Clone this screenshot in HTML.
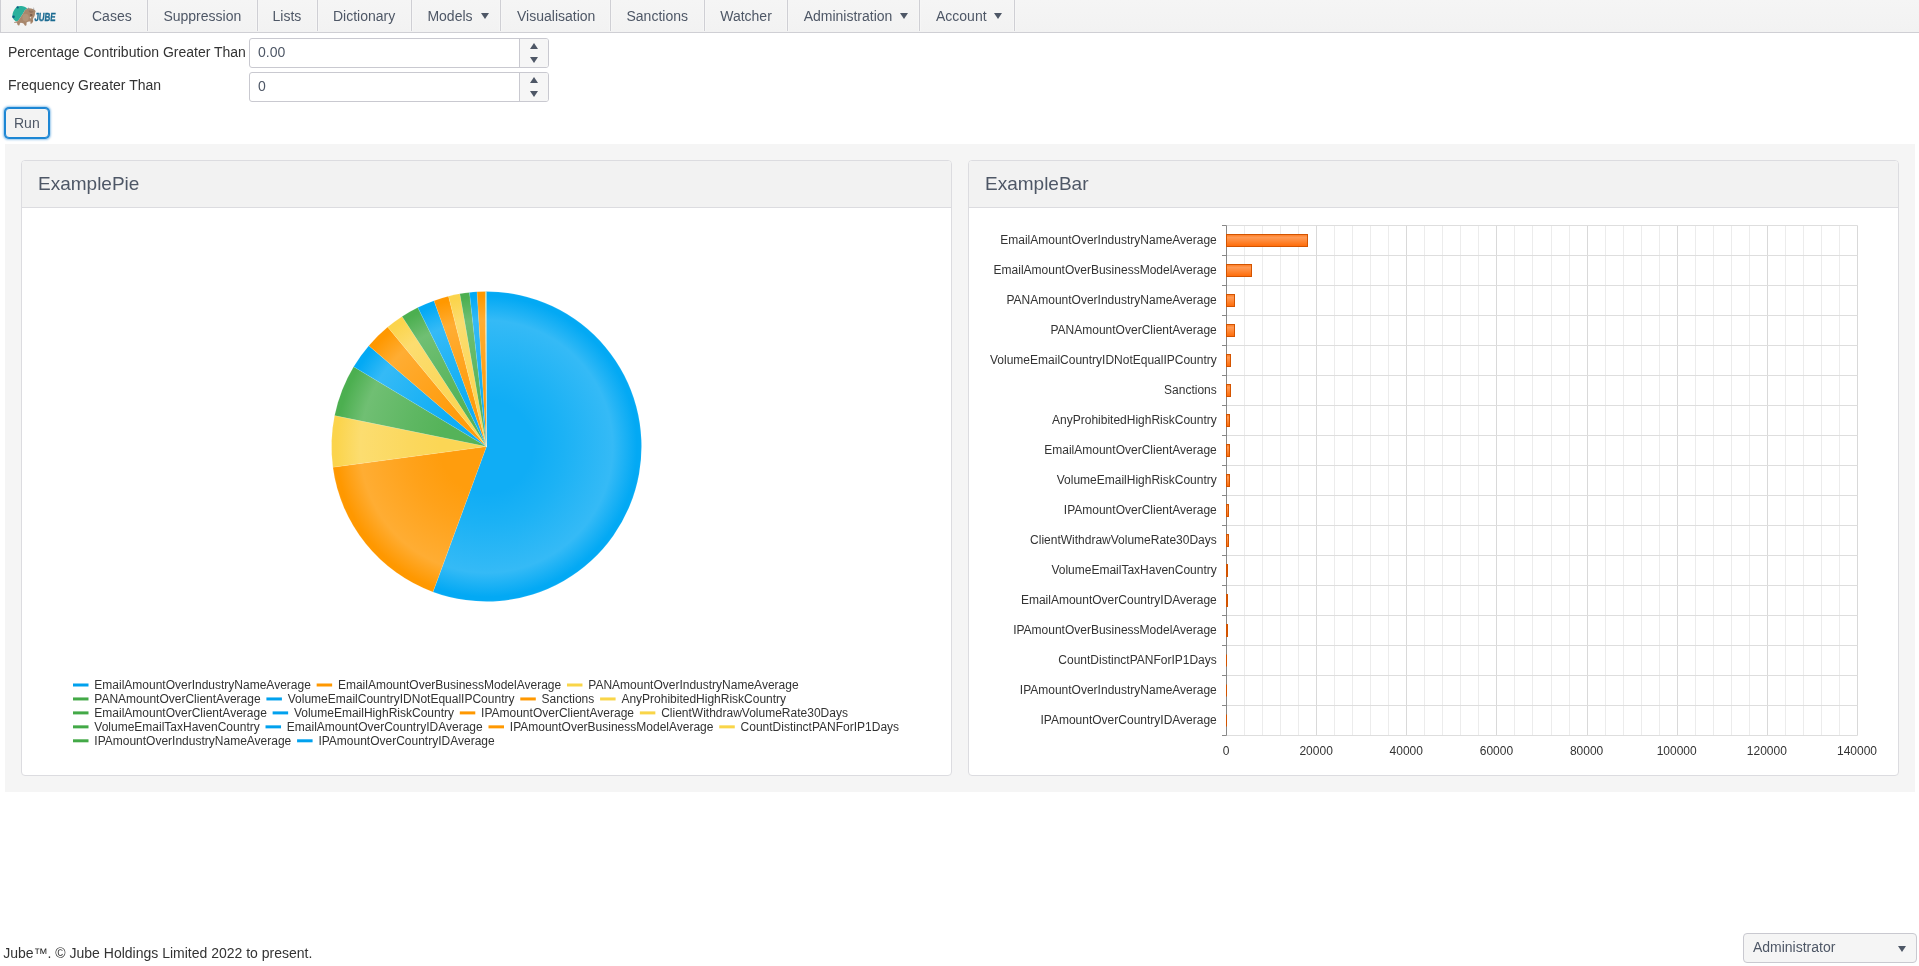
<!DOCTYPE html>
<html><head><meta charset="utf-8"><title>Jube</title>
<style>
html,body{margin:0;padding:0}
body{width:1919px;height:966px;overflow:hidden;position:relative;background:#fff;font-family:"Liberation Sans",sans-serif;}
#root{position:absolute;left:0;top:0;width:1919px;height:966px;background:#fff;will-change:transform;overflow:hidden}
.a{position:absolute}
.menu{left:0;top:0;width:1919px;height:32px;background:linear-gradient(#f5f5f5,#f2f2f2);border-bottom:1px solid #cfcfd4}
.sep{top:0;width:1px;height:31px;background:#cfcfd4;box-shadow:-1px 0 0 #f6f6f6,1px 0 0 #f6f6f6}
.mi{top:0;height:32px;line-height:32px;font-size:14px;color:#4e5766;white-space:nowrap}
.arr{width:0;height:0;border-left:4px solid transparent;border-right:4px solid transparent;border-top:6px solid #4e5766}
.lbl{font-size:14px;color:#333;white-space:nowrap;line-height:16px}
.inp{background:#fff;border:1px solid #c9c9d0;border-radius:3px;box-sizing:border-box}
.spin{background:#f6f6f6;border-left:1px solid #c9c9d0;border-radius:0 2px 2px 0;box-sizing:border-box}
.up{width:0;height:0;border-left:4px solid transparent;border-right:4px solid transparent;border-bottom:6px solid #4e5766}
.dn{width:0;height:0;border-left:4px solid transparent;border-right:4px solid transparent;border-top:6px solid #4e5766}
.itx{font-size:14px;color:#4e5766;line-height:16px;white-space:nowrap}
.panel{left:5px;top:144px;width:1910px;height:648px;background:#f5f5f5}
.card{top:160px;width:931px;height:616px;box-sizing:border-box;border:1px solid #dcdce0;border-radius:4px;background:#fff;overflow:hidden}
.card .hd{left:0;top:0;width:929px;height:46px;background:#f2f2f2;border-bottom:1px solid #dcdce0}
.htx{font-size:19px;color:#4e5766;line-height:20px;white-space:nowrap}
</style></head><body><div id="root">
<div class="a menu"></div>
<div class="a" style="left:0;top:0;width:1px;height:32px;background:#cfcfd4"></div>
<div class="a sep" style="left:76px;height:32px;"></div>
<div class="a sep" style="left:147px;"></div>
<div class="a sep" style="left:257px;"></div>
<div class="a sep" style="left:317px;"></div>
<div class="a sep" style="left:411px;"></div>
<div class="a sep" style="left:500px;"></div>
<div class="a sep" style="left:610px;"></div>
<div class="a sep" style="left:704px;"></div>
<div class="a sep" style="left:787px;"></div>
<div class="a sep" style="left:919px;"></div>
<div class="a sep" style="left:1014px;"></div>
<div class="a mi" style="left:92.0px">Cases</div>
<div class="a mi" style="left:163.4px">Suppression</div>
<div class="a mi" style="left:272.5px">Lists</div>
<div class="a mi" style="left:333.0px">Dictionary</div>
<div class="a mi" style="left:427.4px">Models</div>
<div class="a arr" style="left:480.8px;top:13px"></div>
<div class="a mi" style="left:517.0px">Visualisation</div>
<div class="a mi" style="left:626.5px">Sanctions</div>
<div class="a mi" style="left:720.2px">Watcher</div>
<div class="a mi" style="left:803.7px">Administration</div>
<div class="a arr" style="left:900.0px;top:13px"></div>
<div class="a mi" style="left:936.0px">Account</div>
<div class="a arr" style="left:994.4px;top:13px"></div>
<svg class="a" style="left:0;top:0" width="76" height="32" viewBox="0 0 76 32">
<path d="M16.7 6.7 C18.5 6 20 5.9 21.4 6 C23.3 6.2 25.9 7.2 27.2 8.5 L24.9 10.2 L22.7 13.9 L20.4 17.4 L18.5 20.2 L17 21.4 C16.2 21.6 15.4 21.3 14.8 20.6 C13.3 19.2 12.4 17.8 12.4 15.8 C12.5 12.8 13.8 9.6 16.7 6.7 Z" fill="#2ab09c"/>
<circle cx="17.7" cy="7.4" r="1.15" fill="#0c5c82"/>
<circle cx="13.5" cy="16.8" r="1.3" fill="#0c5c82"/>
<path d="M27.2 8.5 C29 8.2 31.5 8.4 33.5 9.2 C34.6 9.8 35.6 10.6 35.6 11.3 C35.5 12 35.1 12.4 35 13 C35 14 34.9 15 34.6 15.8 C34.3 16.6 34 17.2 33.6 17.6 C33.2 18.4 32.8 19.2 32.8 19.8 C33.2 20.6 33.3 21.4 32.9 22 C32.4 22.8 31.8 23.6 31.1 23.7 C30.5 23.7 30.2 23.3 30.4 22.7 C30.6 22.2 30.9 21.8 30.6 21.5 C29.8 21.4 28.8 21.6 28 21.8 C27.2 22 26.6 22.3 26.5 23 C26.6 23.9 26.7 24.8 26.2 25.4 C25.7 25.8 24.9 25.8 24.6 25.2 C24.2 24.6 23.9 23.9 23.5 23.5 C22.6 23.1 21.6 22.9 20.8 22.8 C20.1 23 19.7 23.6 19.6 24.4 C19.6 25 19.3 25.5 18.6 25.5 C17.9 25.5 17.4 24.9 17.3 24.1 C17.2 23.6 17.1 23.1 16.8 22.8 C16 22.5 15 22.7 14.2 22.7 C13.9 22.6 13.9 22.2 14.3 22 C15.2 21.6 16.2 21.6 17 21.4 L18.5 20.2 L20.4 17.4 L22.7 13.9 L24.9 10.2 Z" fill="#a8876c"/>
<ellipse cx="25.6" cy="17.6" rx="3.2" ry="3.8" fill="#bb9d82" opacity="0.6"/>
<path d="M28.4 10.6 C30 10.2 32 10.4 33.6 11.2 C33.2 12.2 32.4 12.8 31.2 12.9 C30 13 29 12.4 28.4 10.6 Z" fill="#8d6e58" opacity="0.7"/>
<ellipse cx="31.2" cy="15" rx="1.4" ry="0.8" fill="#6a4c3c"/>
<path d="M29.6 17 L31.3 17.2 L30.6 18.7 Z" fill="#ece6e0"/>
<path d="M28.1 10.3 C28.2 9 28.4 7.9 28.8 7.1 C29.1 8 29.1 9.2 29 10.4 Z M33.4 10.6 C33.4 9.3 33.5 8 33.9 6.9 C34.2 8 34.2 9.4 34.1 10.7 Z" fill="#8f8d8e"/>
<path d="M32.8 19.8 C32.2 20.4 31.4 20.6 30.6 21.5" stroke="#7e604c" stroke-width="0.5" fill="none" opacity="0.7"/>
<g transform="translate(34.3 21.4) skewX(-5) scale(0.69 1)"><text x="0" y="0" font-family="Liberation Sans" font-weight="bold" font-size="11.6" fill="#1b6b92" stroke="#1b6b92" stroke-width="0.35" letter-spacing="-0.2">JUBE</text></g>
</svg>
<div class="a lbl" style="left:8px;top:44px">Percentage Contribution Greater Than</div>
<div class="a inp" style="left:249px;top:38px;width:300px;height:30px"></div>
<div class="a spin" style="left:519px;top:39px;width:29px;height:28px"></div>
<div class="a up" style="left:530px;top:43px"></div>
<div class="a dn" style="left:530px;top:57px"></div>
<div class="a itx" style="left:258px;top:44px">0.00</div>
<div class="a lbl" style="left:8px;top:77px">Frequency Greater Than</div>
<div class="a inp" style="left:249px;top:72px;width:300px;height:30px"></div>
<div class="a spin" style="left:519px;top:73px;width:29px;height:28px"></div>
<div class="a up" style="left:530px;top:77px"></div>
<div class="a dn" style="left:530px;top:91px"></div>
<div class="a itx" style="left:258px;top:78px">0</div>
<div class="a" style="left:5px;top:108px;width:44px;height:30px;box-sizing:border-box;border:1px solid #1c86d4;border-radius:4px;background:#f3f3f3;box-shadow:0 0 0 1px #1c86d4,0 0 2px 1.5px rgba(28,134,212,.45)"></div>
<div class="a itx" style="left:14px;top:115px">Run</div>
<div class="a panel"></div>
<div class="a card" style="left:21px"><div class="a hd"></div></div>
<div class="a card" style="left:968px"><div class="a hd"></div></div>
<div class="a htx" style="left:38px;top:174px">ExamplePie</div>
<div class="a htx" style="left:985px;top:174px">ExampleBar</div>
<svg class="a" style="left:21px;top:208px" width="931" height="567" viewBox="21 208 931 567"><defs><radialGradient id="pg0" gradientUnits="userSpaceOnUse" cx="486.5" cy="446.5" r="155"><stop offset="0" stop-color="#10adf5"/><stop offset="0.3" stop-color="#10adf5"/><stop offset="0.5" stop-color="#1cb2f5"/><stop offset="0.815" stop-color="#35baf6"/><stop offset="0.97" stop-color="#03a9f4"/></radialGradient><radialGradient id="pg1" gradientUnits="userSpaceOnUse" cx="486.5" cy="446.5" r="155"><stop offset="0" stop-color="#ff9d0d"/><stop offset="0.3" stop-color="#ff9d0d"/><stop offset="0.5" stop-color="#ffa21a"/><stop offset="0.815" stop-color="#ffad33"/><stop offset="0.97" stop-color="#ff9800"/></radialGradient><radialGradient id="pg2" gradientUnits="userSpaceOnUse" cx="486.5" cy="446.5" r="155"><stop offset="0" stop-color="#fbd655"/><stop offset="0.3" stop-color="#fbd655"/><stop offset="0.5" stop-color="#fbd85e"/><stop offset="0.815" stop-color="#fcdd70"/><stop offset="0.97" stop-color="#fbd44c"/></radialGradient><radialGradient id="pg3" gradientUnits="userSpaceOnUse" cx="486.5" cy="446.5" r="155"><stop offset="0" stop-color="#55b359"/><stop offset="0.3" stop-color="#55b359"/><stop offset="0.5" stop-color="#5eb762"/><stop offset="0.815" stop-color="#70bf73"/><stop offset="0.97" stop-color="#4caf50"/></radialGradient></defs><path d="M486.5 446.5 L486.50 291.50 A155 155 0 1 1 432.98 591.97 Z" fill="url(#pg0)" stroke="#ffffff" stroke-opacity="0.2" stroke-width="0.5"/><path d="M486.5 446.5 L432.98 591.97 A155 155 0 0 1 332.90 467.27 Z" fill="url(#pg1)" stroke="#ffffff" stroke-opacity="0.2" stroke-width="0.5"/><path d="M486.5 446.5 L332.90 467.27 A155 155 0 0 1 334.61 415.60 Z" fill="url(#pg2)" stroke="#ffffff" stroke-opacity="0.2" stroke-width="0.5"/><path d="M486.5 446.5 L334.61 415.60 A155 155 0 0 1 353.64 366.67 Z" fill="url(#pg3)" stroke="#ffffff" stroke-opacity="0.2" stroke-width="0.5"/><path d="M486.5 446.5 L353.64 366.67 A155 155 0 0 1 368.81 345.63 Z" fill="url(#pg0)" stroke="#ffffff" stroke-opacity="0.2" stroke-width="0.5"/><path d="M486.5 446.5 L368.81 345.63 A155 155 0 0 1 387.70 327.07 Z" fill="url(#pg1)" stroke="#ffffff" stroke-opacity="0.2" stroke-width="0.5"/><path d="M486.5 446.5 L387.70 327.07 A155 155 0 0 1 402.08 316.51 Z" fill="url(#pg2)" stroke="#ffffff" stroke-opacity="0.2" stroke-width="0.5"/><path d="M486.5 446.5 L402.08 316.51 A155 155 0 0 1 417.82 307.54 Z" fill="url(#pg3)" stroke="#ffffff" stroke-opacity="0.2" stroke-width="0.5"/><path d="M486.5 446.5 L417.82 307.54 A155 155 0 0 1 434.00 300.66 Z" fill="url(#pg0)" stroke="#ffffff" stroke-opacity="0.2" stroke-width="0.5"/><path d="M486.5 446.5 L434.00 300.66 A155 155 0 0 1 448.48 296.24 Z" fill="url(#pg1)" stroke="#ffffff" stroke-opacity="0.2" stroke-width="0.5"/><path d="M486.5 446.5 L448.48 296.24 A155 155 0 0 1 459.85 293.81 Z" fill="url(#pg2)" stroke="#ffffff" stroke-opacity="0.2" stroke-width="0.5"/><path d="M486.5 446.5 L459.85 293.81 A155 155 0 0 1 469.49 292.44 Z" fill="url(#pg3)" stroke="#ffffff" stroke-opacity="0.2" stroke-width="0.5"/><path d="M486.5 446.5 L469.49 292.44 A155 155 0 0 1 477.04 291.79 Z" fill="url(#pg0)" stroke="#ffffff" stroke-opacity="0.2" stroke-width="0.5"/><path d="M486.5 446.5 L477.04 291.79 A155 155 0 0 1 485.42 291.50 Z" fill="url(#pg1)" stroke="#ffffff" stroke-opacity="0.2" stroke-width="0.5"/><path d="M486.5 446.5 L485.42 291.50 A155 155 0 0 1 485.82 291.50 Z" fill="url(#pg2)" stroke="#ffffff" stroke-opacity="0.2" stroke-width="0.5"/><path d="M486.5 446.5 L485.82 291.50 A155 155 0 0 1 486.23 291.50 Z" fill="url(#pg3)" stroke="#ffffff" stroke-opacity="0.2" stroke-width="0.5"/><path d="M486.5 446.5 L486.23 291.50 A155 155 0 0 1 486.50 291.50 Z" fill="url(#pg0)" stroke="#ffffff" stroke-opacity="0.2" stroke-width="0.5"/><rect x="73.00" y="683.50" width="15.5" height="3" fill="#00a1ee"/><text x="94.30" y="688.80" font-family="Liberation Sans" font-size="12" fill="#333">EmailAmountOverIndustryNameAverage</text><rect x="316.65" y="683.50" width="15.5" height="3" fill="#ff9800"/><text x="337.95" y="688.80" font-family="Liberation Sans" font-size="12" fill="#333">EmailAmountOverBusinessModelAverage</text><rect x="566.97" y="683.50" width="15.5" height="3" fill="#f9d548"/><text x="588.27" y="688.80" font-family="Liberation Sans" font-size="12" fill="#333">PANAmountOverIndustryNameAverage</text><rect x="73.00" y="697.45" width="15.5" height="3" fill="#43a947"/><text x="94.30" y="702.75" font-family="Liberation Sans" font-size="12" fill="#333">PANAmountOverClientAverage</text><rect x="266.41" y="697.45" width="15.5" height="3" fill="#00a1ee"/><text x="287.71" y="702.75" font-family="Liberation Sans" font-size="12" fill="#333">VolumeEmailCountryIDNotEqualIPCountry</text><rect x="520.29" y="697.45" width="15.5" height="3" fill="#ff9800"/><text x="541.59" y="702.75" font-family="Liberation Sans" font-size="12" fill="#333">Sanctions</text><rect x="600.09" y="697.45" width="15.5" height="3" fill="#f9d548"/><text x="621.39" y="702.75" font-family="Liberation Sans" font-size="12" fill="#333">AnyProhibitedHighRiskCountry</text><rect x="73.00" y="711.40" width="15.5" height="3" fill="#43a947"/><text x="94.30" y="716.70" font-family="Liberation Sans" font-size="12" fill="#333">EmailAmountOverClientAverage</text><rect x="272.63" y="711.40" width="15.5" height="3" fill="#00a1ee"/><text x="293.93" y="716.70" font-family="Liberation Sans" font-size="12" fill="#333">VolumeEmailHighRiskCountry</text><rect x="459.79" y="711.40" width="15.5" height="3" fill="#ff9800"/><text x="481.09" y="716.70" font-family="Liberation Sans" font-size="12" fill="#333">IPAmountOverClientAverage</text><rect x="639.86" y="711.40" width="15.5" height="3" fill="#f9d548"/><text x="661.16" y="716.70" font-family="Liberation Sans" font-size="12" fill="#333">ClientWithdrawVolumeRate30Days</text><rect x="73.00" y="725.35" width="15.5" height="3" fill="#43a947"/><text x="94.30" y="730.65" font-family="Liberation Sans" font-size="12" fill="#333">VolumeEmailTaxHavenCountry</text><rect x="265.52" y="725.35" width="15.5" height="3" fill="#00a1ee"/><text x="286.82" y="730.65" font-family="Liberation Sans" font-size="12" fill="#333">EmailAmountOverCountryIDAverage</text><rect x="488.50" y="725.35" width="15.5" height="3" fill="#ff9800"/><text x="509.80" y="730.65" font-family="Liberation Sans" font-size="12" fill="#333">IPAmountOverBusinessModelAverage</text><rect x="719.27" y="725.35" width="15.5" height="3" fill="#f9d548"/><text x="740.57" y="730.65" font-family="Liberation Sans" font-size="12" fill="#333">CountDistinctPANForIP1Days</text><rect x="73.00" y="739.30" width="15.5" height="3" fill="#43a947"/><text x="94.30" y="744.60" font-family="Liberation Sans" font-size="12" fill="#333">IPAmountOverIndustryNameAverage</text><rect x="297.08" y="739.30" width="15.5" height="3" fill="#00a1ee"/><text x="318.38" y="744.60" font-family="Liberation Sans" font-size="12" fill="#333">IPAmountOverCountryIDAverage</text></svg>
<svg class="a" style="left:968px;top:208px" width="931" height="567" viewBox="968 208 931 567"><defs><linearGradient id="bg" x1="0" y1="0" x2="0" y2="1"><stop offset="0" stop-color="#ff7b20"/><stop offset="0.25" stop-color="#ff9a55"/><stop offset="0.55" stop-color="#ff8836"/><stop offset="1" stop-color="#ff6a06"/></linearGradient></defs><line x1="1244.5" y1="225.5" x2="1244.5" y2="735.5" stroke="#ececec" stroke-width="1"/><line x1="1262.5" y1="225.5" x2="1262.5" y2="735.5" stroke="#ececec" stroke-width="1"/><line x1="1280.5" y1="225.5" x2="1280.5" y2="735.5" stroke="#ececec" stroke-width="1"/><line x1="1298.5" y1="225.5" x2="1298.5" y2="735.5" stroke="#ececec" stroke-width="1"/><line x1="1316.5" y1="225.5" x2="1316.5" y2="735.5" stroke="#d9d9d9" stroke-width="1"/><line x1="1334.5" y1="225.5" x2="1334.5" y2="735.5" stroke="#ececec" stroke-width="1"/><line x1="1352.5" y1="225.5" x2="1352.5" y2="735.5" stroke="#ececec" stroke-width="1"/><line x1="1370.5" y1="225.5" x2="1370.5" y2="735.5" stroke="#ececec" stroke-width="1"/><line x1="1388.5" y1="225.5" x2="1388.5" y2="735.5" stroke="#ececec" stroke-width="1"/><line x1="1406.5" y1="225.5" x2="1406.5" y2="735.5" stroke="#d9d9d9" stroke-width="1"/><line x1="1424.5" y1="225.5" x2="1424.5" y2="735.5" stroke="#ececec" stroke-width="1"/><line x1="1442.5" y1="225.5" x2="1442.5" y2="735.5" stroke="#ececec" stroke-width="1"/><line x1="1460.5" y1="225.5" x2="1460.5" y2="735.5" stroke="#ececec" stroke-width="1"/><line x1="1478.5" y1="225.5" x2="1478.5" y2="735.5" stroke="#ececec" stroke-width="1"/><line x1="1496.5" y1="225.5" x2="1496.5" y2="735.5" stroke="#d9d9d9" stroke-width="1"/><line x1="1514.5" y1="225.5" x2="1514.5" y2="735.5" stroke="#ececec" stroke-width="1"/><line x1="1532.5" y1="225.5" x2="1532.5" y2="735.5" stroke="#ececec" stroke-width="1"/><line x1="1551.5" y1="225.5" x2="1551.5" y2="735.5" stroke="#ececec" stroke-width="1"/><line x1="1569.5" y1="225.5" x2="1569.5" y2="735.5" stroke="#ececec" stroke-width="1"/><line x1="1587.5" y1="225.5" x2="1587.5" y2="735.5" stroke="#d9d9d9" stroke-width="1"/><line x1="1605.5" y1="225.5" x2="1605.5" y2="735.5" stroke="#ececec" stroke-width="1"/><line x1="1623.5" y1="225.5" x2="1623.5" y2="735.5" stroke="#ececec" stroke-width="1"/><line x1="1641.5" y1="225.5" x2="1641.5" y2="735.5" stroke="#ececec" stroke-width="1"/><line x1="1659.5" y1="225.5" x2="1659.5" y2="735.5" stroke="#ececec" stroke-width="1"/><line x1="1677.5" y1="225.5" x2="1677.5" y2="735.5" stroke="#d9d9d9" stroke-width="1"/><line x1="1695.5" y1="225.5" x2="1695.5" y2="735.5" stroke="#ececec" stroke-width="1"/><line x1="1713.5" y1="225.5" x2="1713.5" y2="735.5" stroke="#ececec" stroke-width="1"/><line x1="1731.5" y1="225.5" x2="1731.5" y2="735.5" stroke="#ececec" stroke-width="1"/><line x1="1749.5" y1="225.5" x2="1749.5" y2="735.5" stroke="#ececec" stroke-width="1"/><line x1="1767.5" y1="225.5" x2="1767.5" y2="735.5" stroke="#d9d9d9" stroke-width="1"/><line x1="1785.5" y1="225.5" x2="1785.5" y2="735.5" stroke="#ececec" stroke-width="1"/><line x1="1803.5" y1="225.5" x2="1803.5" y2="735.5" stroke="#ececec" stroke-width="1"/><line x1="1821.5" y1="225.5" x2="1821.5" y2="735.5" stroke="#ececec" stroke-width="1"/><line x1="1839.5" y1="225.5" x2="1839.5" y2="735.5" stroke="#ececec" stroke-width="1"/><line x1="1857.5" y1="225.5" x2="1857.5" y2="735.5" stroke="#d9d9d9" stroke-width="1"/><line x1="1226.5" y1="225.5" x2="1857.5" y2="225.5" stroke="#dedede" stroke-width="1"/><line x1="1222" y1="225.5" x2="1226.5" y2="225.5" stroke="#888" stroke-width="1"/><line x1="1226.5" y1="255.5" x2="1857.5" y2="255.5" stroke="#dedede" stroke-width="1"/><line x1="1222" y1="255.5" x2="1226.5" y2="255.5" stroke="#888" stroke-width="1"/><line x1="1226.5" y1="285.5" x2="1857.5" y2="285.5" stroke="#dedede" stroke-width="1"/><line x1="1222" y1="285.5" x2="1226.5" y2="285.5" stroke="#888" stroke-width="1"/><line x1="1226.5" y1="315.5" x2="1857.5" y2="315.5" stroke="#dedede" stroke-width="1"/><line x1="1222" y1="315.5" x2="1226.5" y2="315.5" stroke="#888" stroke-width="1"/><line x1="1226.5" y1="345.5" x2="1857.5" y2="345.5" stroke="#dedede" stroke-width="1"/><line x1="1222" y1="345.5" x2="1226.5" y2="345.5" stroke="#888" stroke-width="1"/><line x1="1226.5" y1="375.5" x2="1857.5" y2="375.5" stroke="#dedede" stroke-width="1"/><line x1="1222" y1="375.5" x2="1226.5" y2="375.5" stroke="#888" stroke-width="1"/><line x1="1226.5" y1="405.5" x2="1857.5" y2="405.5" stroke="#dedede" stroke-width="1"/><line x1="1222" y1="405.5" x2="1226.5" y2="405.5" stroke="#888" stroke-width="1"/><line x1="1226.5" y1="435.5" x2="1857.5" y2="435.5" stroke="#dedede" stroke-width="1"/><line x1="1222" y1="435.5" x2="1226.5" y2="435.5" stroke="#888" stroke-width="1"/><line x1="1226.5" y1="465.5" x2="1857.5" y2="465.5" stroke="#dedede" stroke-width="1"/><line x1="1222" y1="465.5" x2="1226.5" y2="465.5" stroke="#888" stroke-width="1"/><line x1="1226.5" y1="495.5" x2="1857.5" y2="495.5" stroke="#dedede" stroke-width="1"/><line x1="1222" y1="495.5" x2="1226.5" y2="495.5" stroke="#888" stroke-width="1"/><line x1="1226.5" y1="525.5" x2="1857.5" y2="525.5" stroke="#dedede" stroke-width="1"/><line x1="1222" y1="525.5" x2="1226.5" y2="525.5" stroke="#888" stroke-width="1"/><line x1="1226.5" y1="555.5" x2="1857.5" y2="555.5" stroke="#dedede" stroke-width="1"/><line x1="1222" y1="555.5" x2="1226.5" y2="555.5" stroke="#888" stroke-width="1"/><line x1="1226.5" y1="585.5" x2="1857.5" y2="585.5" stroke="#dedede" stroke-width="1"/><line x1="1222" y1="585.5" x2="1226.5" y2="585.5" stroke="#888" stroke-width="1"/><line x1="1226.5" y1="615.5" x2="1857.5" y2="615.5" stroke="#dedede" stroke-width="1"/><line x1="1222" y1="615.5" x2="1226.5" y2="615.5" stroke="#888" stroke-width="1"/><line x1="1226.5" y1="645.5" x2="1857.5" y2="645.5" stroke="#dedede" stroke-width="1"/><line x1="1222" y1="645.5" x2="1226.5" y2="645.5" stroke="#888" stroke-width="1"/><line x1="1226.5" y1="675.5" x2="1857.5" y2="675.5" stroke="#dedede" stroke-width="1"/><line x1="1222" y1="675.5" x2="1226.5" y2="675.5" stroke="#888" stroke-width="1"/><line x1="1226.5" y1="705.5" x2="1857.5" y2="705.5" stroke="#dedede" stroke-width="1"/><line x1="1222" y1="705.5" x2="1226.5" y2="705.5" stroke="#888" stroke-width="1"/><line x1="1226.5" y1="735.5" x2="1857.5" y2="735.5" stroke="#dedede" stroke-width="1"/><line x1="1222" y1="735.5" x2="1226.5" y2="735.5" stroke="#888" stroke-width="1"/><line x1="1226.5" y1="225.5" x2="1226.5" y2="735.5" stroke="#888" stroke-width="1"/><rect x="1226.5" y="234.5" width="81" height="12" fill="url(#bg)" stroke="#d35400" stroke-width="1"/><text x="1216.8" y="244.0" text-anchor="end" font-family="Liberation Sans" font-size="12" fill="#333">EmailAmountOverIndustryNameAverage</text><rect x="1226.5" y="264.5" width="25" height="12" fill="url(#bg)" stroke="#d35400" stroke-width="1"/><text x="1216.8" y="274.0" text-anchor="end" font-family="Liberation Sans" font-size="12" fill="#333">EmailAmountOverBusinessModelAverage</text><rect x="1226.5" y="294.5" width="8" height="12" fill="url(#bg)" stroke="#d35400" stroke-width="1"/><text x="1216.8" y="304.0" text-anchor="end" font-family="Liberation Sans" font-size="12" fill="#333">PANAmountOverIndustryNameAverage</text><rect x="1226.5" y="324.5" width="8" height="12" fill="url(#bg)" stroke="#d35400" stroke-width="1"/><text x="1216.8" y="334.0" text-anchor="end" font-family="Liberation Sans" font-size="12" fill="#333">PANAmountOverClientAverage</text><rect x="1226.5" y="354.5" width="4" height="12" fill="url(#bg)" stroke="#d35400" stroke-width="1"/><text x="1216.8" y="364.0" text-anchor="end" font-family="Liberation Sans" font-size="12" fill="#333">VolumeEmailCountryIDNotEqualIPCountry</text><rect x="1226.5" y="384.5" width="4" height="12" fill="url(#bg)" stroke="#d35400" stroke-width="1"/><text x="1216.8" y="394.0" text-anchor="end" font-family="Liberation Sans" font-size="12" fill="#333">Sanctions</text><rect x="1226.5" y="414.5" width="3" height="12" fill="url(#bg)" stroke="#d35400" stroke-width="1"/><text x="1216.8" y="424.0" text-anchor="end" font-family="Liberation Sans" font-size="12" fill="#333">AnyProhibitedHighRiskCountry</text><rect x="1226.5" y="444.5" width="3" height="12" fill="url(#bg)" stroke="#d35400" stroke-width="1"/><text x="1216.8" y="454.0" text-anchor="end" font-family="Liberation Sans" font-size="12" fill="#333">EmailAmountOverClientAverage</text><rect x="1226.5" y="474.5" width="3" height="12" fill="url(#bg)" stroke="#d35400" stroke-width="1"/><text x="1216.8" y="484.0" text-anchor="end" font-family="Liberation Sans" font-size="12" fill="#333">VolumeEmailHighRiskCountry</text><rect x="1226.5" y="504.5" width="2" height="12" fill="url(#bg)" stroke="#d35400" stroke-width="1"/><text x="1216.8" y="514.0" text-anchor="end" font-family="Liberation Sans" font-size="12" fill="#333">IPAmountOverClientAverage</text><rect x="1226.5" y="534.5" width="2" height="12" fill="url(#bg)" stroke="#d35400" stroke-width="1"/><text x="1216.8" y="544.0" text-anchor="end" font-family="Liberation Sans" font-size="12" fill="#333">ClientWithdrawVolumeRate30Days</text><rect x="1226.5" y="564.5" width="1" height="12" fill="url(#bg)" stroke="#d35400" stroke-width="1"/><text x="1216.8" y="574.0" text-anchor="end" font-family="Liberation Sans" font-size="12" fill="#333">VolumeEmailTaxHavenCountry</text><rect x="1226.5" y="594.5" width="1" height="12" fill="url(#bg)" stroke="#d35400" stroke-width="1"/><text x="1216.8" y="604.0" text-anchor="end" font-family="Liberation Sans" font-size="12" fill="#333">EmailAmountOverCountryIDAverage</text><rect x="1226.5" y="624.5" width="1" height="12" fill="url(#bg)" stroke="#d35400" stroke-width="1"/><text x="1216.8" y="634.0" text-anchor="end" font-family="Liberation Sans" font-size="12" fill="#333">IPAmountOverBusinessModelAverage</text><line x1="1226.5" y1="654.5" x2="1226.5" y2="666.5" stroke="#d35400" stroke-width="1"/><text x="1216.8" y="664.0" text-anchor="end" font-family="Liberation Sans" font-size="12" fill="#333">CountDistinctPANForIP1Days</text><line x1="1226.5" y1="684.5" x2="1226.5" y2="696.5" stroke="#d35400" stroke-width="1"/><text x="1216.8" y="694.0" text-anchor="end" font-family="Liberation Sans" font-size="12" fill="#333">IPAmountOverIndustryNameAverage</text><line x1="1226.5" y1="714.5" x2="1226.5" y2="726.5" stroke="#d35400" stroke-width="1"/><text x="1216.8" y="724.0" text-anchor="end" font-family="Liberation Sans" font-size="12" fill="#333">IPAmountOverCountryIDAverage</text><text x="1226.00" y="755.1" text-anchor="middle" font-family="Liberation Sans" font-size="12" fill="#333">0</text><text x="1316.14" y="755.1" text-anchor="middle" font-family="Liberation Sans" font-size="12" fill="#333">20000</text><text x="1406.29" y="755.1" text-anchor="middle" font-family="Liberation Sans" font-size="12" fill="#333">40000</text><text x="1496.43" y="755.1" text-anchor="middle" font-family="Liberation Sans" font-size="12" fill="#333">60000</text><text x="1586.57" y="755.1" text-anchor="middle" font-family="Liberation Sans" font-size="12" fill="#333">80000</text><text x="1676.71" y="755.1" text-anchor="middle" font-family="Liberation Sans" font-size="12" fill="#333">100000</text><text x="1766.86" y="755.1" text-anchor="middle" font-family="Liberation Sans" font-size="12" fill="#333">120000</text><text x="1857.00" y="755.1" text-anchor="middle" font-family="Liberation Sans" font-size="12" fill="#333">140000</text></svg>
<div class="a lbl" style="left:3.2px;top:945px">Jube™. © Jube Holdings Limited 2022 to present.</div>
<div class="a" style="left:1743px;top:933px;width:174px;height:30px;box-sizing:border-box;border:1px solid #c9c9d0;border-radius:4px;background:#f5f5f5"></div>
<div class="a itx" style="left:1752.9px;top:939.2px">Administrator</div>
<div class="a arr" style="left:1898px;top:946px"></div>
</div></body></html>
